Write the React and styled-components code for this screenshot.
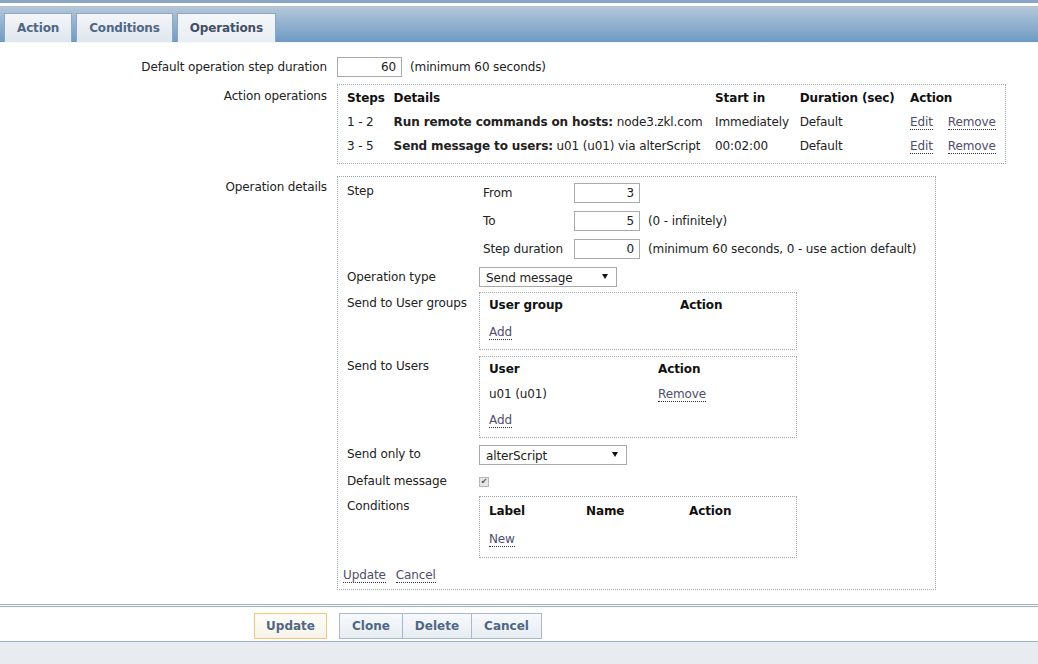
import React from "react";
import styled, { createGlobalStyle } from "styled-components";

const Global = createGlobalStyle`
  html, body { margin: 0; padding: 0; background: #fff; }
  body {
    font-family: "DejaVu Sans", Verdana, sans-serif;
    font-size: 12px;
    letter-spacing: -0.12px;
    color: #222;
  }
`;

const Page = styled.div`
  width: 1038px;
  min-height: 664px;
  display: flex;
  flex-direction: column;
`;

const TopStrip = styled.div`
  border-top: 3px solid #8aa5c3;
  border-bottom: 1px solid #b9c4cf;
  height: 3px;
  background: #fff;
`;

const TabBar = styled.div`
  box-sizing: border-box;
  height: 36px;
  padding: 6px 0 0 4px;
  display: flex;
  align-items: flex-end;
  gap: 4px;
  background: linear-gradient(#b4c6d9, #6e9ac4);
  border-bottom: 1px solid #f4f8fc;
`;

const Tab = styled.div`
  box-sizing: border-box;
  height: 29px;
  padding: 0 12px;
  display: flex;
  align-items: center;
  border: 1px solid #8ea7c2;
  border-bottom: none;
  background: ${(p) =>
    p.$active ? "linear-gradient(#f4f7fa, #e9eef3)" : "linear-gradient(#f4f6f9, #dfe6ee)"};
  color: ${(p) => (p.$active ? "#3f5069" : "#4f6786")};
  font-weight: bold;
  font-size: 12px;
  letter-spacing: -0.15px;
`;

const Form = styled.div`
  padding: 14px 0 14px;
  display: flex;
  flex-direction: column;
`;

const FormRow = styled.div`
  display: grid;
  grid-template-columns: 327px 1fr;
  column-gap: 10px;
  align-items: start;
  margin-top: ${(p) => p.$mt || 0}px;
`;

const Label = styled.div`
  text-align: right;
  line-height: 20px;
  padding-top: ${(p) => p.$pad || 0}px;
`;

const Inline = styled.div`
  display: flex;
  align-items: center;
  gap: 8px;
`;

const NumInput = styled.div`
  box-sizing: border-box;
  width: ${(p) => p.$w || 66}px;
  height: 20px;
  border: 1px solid #a9a9a9;
  text-align: right;
  padding-right: 5px;
  line-height: 18px;
  background: #fff;
`;

const Box = styled.div`
  box-sizing: border-box;
  border: 1px dotted #9ea4aa;
  width: ${(p) => p.$w}px;
  padding: ${(p) => p.$pad || "0 9px 6px"};
`;

const Table = styled.table`
  border-collapse: collapse;
  table-layout: fixed;
  td, th {
    padding: 0;
    text-align: left;
    white-space: nowrap;
    vertical-align: middle;
  }
  th { font-weight: bold; color: #111; }
`;

const Tr = styled.tr`
  height: ${(p) => p.$h || 24}px;
`;

const Link = styled.span`
  color: #4e4e6c;
  border-bottom: 1px dotted #333;
  margin-right: ${(p) => p.$mr || 0}px;
  cursor: pointer;
`;

const InnerRow = styled.div`
  display: grid;
  grid-template-columns: 132px 1fr;
  align-items: start;
  margin-top: ${(p) => p.$mt || 0}px;
`;

const InnerLabel = styled.div`
  line-height: 14px;
  padding-top: ${(p) => (p.$pad !== undefined ? p.$pad : 3)}px;
`;

const StepGrid = styled.div`
  display: grid;
  grid-template-columns: 91px auto;
  row-gap: 8px;
  padding-left: 4px;
  align-items: center;
`;

const Select = styled.div`
  box-sizing: border-box;
  width: ${(p) => p.$w}px;
  height: 20px;
  border: 1px solid #a9a9a9;
  background: #fff;
  display: flex;
  align-items: center;
  justify-content: space-between;
  padding: 2px 8px 0 6px;
`;

const Caret = styled.span`
  width: 0;
  height: 0;
  border-left: 3px solid transparent;
  border-right: 3px solid transparent;
  border-top: 5px solid #111;
  margin-bottom: 3px;
`;

const Check = styled.span`
  box-sizing: border-box;
  display: inline-flex;
  align-items: center;
  justify-content: center;
  width: 10px;
  height: 10px;
  margin-top: 4px;
  border: 1px solid #b5b5b5;
  background: #e6e6e6;
  color: #555;
  font-size: 8px;
  line-height: 1;
`;

const LinkRow = styled.div`
  margin-top: 9px;
  margin-left: -4px;
  line-height: 16px;
`;

const Footer = styled.div`
  border-top: 3px double #9fb1c5;
`;

const FooterInner = styled.div`
  padding: 6px 0 2px;
  border-bottom: 1px solid #9fb1c5;
  display: grid;
  grid-template-columns: 327px 1fr;
  column-gap: 12px;
  height: 26px;
`;

const ButtonGroup = styled.div`
  display: flex;
  justify-content: ${(p) => (p.$end ? "flex-end" : "flex-start")};
`;

const Button = styled.div`
  box-sizing: border-box;
  height: 26px;
  padding: 0 ${(p) => (p.$primary ? 11 : 12)}px;
  display: flex;
  align-items: center;
  font-weight: bold;
  font-size: 12px;
  letter-spacing: 0;
  color: #4f6786;
  background: ${(p) => (p.$primary ? "linear-gradient(#fffdf8, #f7f3ea)" : "linear-gradient(#f7f9fb, #e7edf3)")};
  border: 1px solid ${(p) => (p.$primary ? "#f0c878" : "#aab9c9")};
  & + & { border-left: none; }
`;

const BottomBar = styled.div`
  flex: 1;
  background: #e8ecf0;
`;

export default function App() {
  return (
    <Page>
      <Global />
      <TopStrip />
      <TabBar>
        <Tab>Action</Tab>
        <Tab>Conditions</Tab>
        <Tab $active>Operations</Tab>
      </TabBar>
      <Form>
        <FormRow>
          <Label>Default operation step duration</Label>
          <Inline>
            <NumInput $w={65}>60</NumInput>
            <span>(minimum 60 seconds)</span>
          </Inline>
        </FormRow>
        <FormRow $mt={7}>
          <Label $pad={2}>Action operations</Label>
          <Box $w={669} $pad="0 9px 5px">
            <Table>
              <colgroup>
                <col style={{ width: 47 }} />
                <col style={{ width: 322 }} />
                <col style={{ width: 85 }} />
                <col style={{ width: 111 }} />
                <col style={{ width: 86 }} />
              </colgroup>
              <thead>
                <Tr $h={25}>
                  <th>Steps</th>
                  <th>Details</th>
                  <th>Start in</th>
                  <th>Duration (sec)</th>
                  <th>Action</th>
                </Tr>
              </thead>
              <tbody>
                <Tr>
                  <td>1 - 2</td>
                  <td><b>Run remote commands on hosts:</b> node3.zkl.com</td>
                  <td>Immediately</td>
                  <td>Default</td>
                  <td><Link $mr={15}>Edit</Link><Link>Remove</Link></td>
                </Tr>
                <Tr>
                  <td>3 - 5</td>
                  <td><b>Send message to users:</b> u01 (u01) via alterScript</td>
                  <td>00:02:00</td>
                  <td>Default</td>
                  <td><Link $mr={15}>Edit</Link><Link>Remove</Link></td>
                </Tr>
              </tbody>
            </Table>
          </Box>
        </FormRow>
        <FormRow $mt={12}>
          <Label $pad={1}>Operation details</Label>
          <Box $w={599} $pad="6px 9px 6px 9px">
            <InnerRow>
              <InnerLabel $pad={1}>Step</InnerLabel>
              <StepGrid>
                <span>From</span>
                <Inline><NumInput>3</NumInput></Inline>
                <span>To</span>
                <Inline><NumInput>5</NumInput><span>(0 - infinitely)</span></Inline>
                <span>Step duration</span>
                <Inline><NumInput>0</NumInput><span>(minimum 60 seconds, 0 - use action default)</span></Inline>
              </StepGrid>
            </InnerRow>

            <InnerRow $mt={8}>
              <InnerLabel>Operation type</InnerLabel>
              <Select $w={138}><span>Send message</span><Caret /></Select>
            </InnerRow>

            <InnerRow $mt={5}>
              <InnerLabel $pad={4}>Send to User groups</InnerLabel>
              <Box $w={318} $pad="0 9px 3px">
                <Table>
                  <colgroup>
                    <col style={{ width: 191 }} />
                    <col style={{ width: 100 }} />
                  </colgroup>
                  <thead>
                    <Tr><th>User group</th><th>Action</th></Tr>
                  </thead>
                  <tbody>
                    <Tr $h={29}><td><Link>Add</Link></td><td /></Tr>
                  </tbody>
                </Table>
              </Box>
            </InnerRow>

            <InnerRow $mt={6}>
              <InnerLabel>Send to Users</InnerLabel>
              <Box $w={318} $pad="0 9px 5px">
                <Table>
                  <colgroup>
                    <col style={{ width: 169 }} />
                    <col style={{ width: 120 }} />
                  </colgroup>
                  <thead>
                    <Tr><th>User</th><th>Action</th></Tr>
                  </thead>
                  <tbody>
                    <Tr $h={26}><td>u01 (u01)</td><td><Link>Remove</Link></td></Tr>
                    <Tr $h={25}><td><Link>Add</Link></td><td /></Tr>
                  </tbody>
                </Table>
              </Box>
            </InnerRow>

            <InnerRow $mt={7}>
              <InnerLabel $pad={2}>Send only to</InnerLabel>
              <Select $w={148}><span>alterScript</span><Caret /></Select>
            </InnerRow>

            <InnerRow $mt={8}>
              <InnerLabel $pad={1}>Default message</InnerLabel>
              <div><Check>✔</Check></div>
            </InnerRow>

            <InnerRow $mt={8}>
              <InnerLabel>Conditions</InnerLabel>
              <Box $w={318} $pad="2px 9px 3px">
                <Table>
                  <colgroup>
                    <col style={{ width: 97 }} />
                    <col style={{ width: 103 }} />
                    <col style={{ width: 90 }} />
                  </colgroup>
                  <thead>
                    <Tr><th>Label</th><th>Name</th><th>Action</th></Tr>
                  </thead>
                  <tbody>
                    <Tr $h={31}><td><Link>New</Link></td><td /><td /></Tr>
                  </tbody>
                </Table>
              </Box>
            </InnerRow>

            <LinkRow><Link $mr={10}>Update</Link><Link>Cancel</Link></LinkRow>
          </Box>
        </FormRow>
      </Form>
      <Footer>
        <FooterInner>
          <ButtonGroup $end>
            <Button $primary>Update</Button>
          </ButtonGroup>
          <ButtonGroup>
            <Button>Clone</Button>
            <Button>Delete</Button>
            <Button>Cancel</Button>
          </ButtonGroup>
        </FooterInner>
      </Footer>
      <BottomBar />
    </Page>
  );
}
